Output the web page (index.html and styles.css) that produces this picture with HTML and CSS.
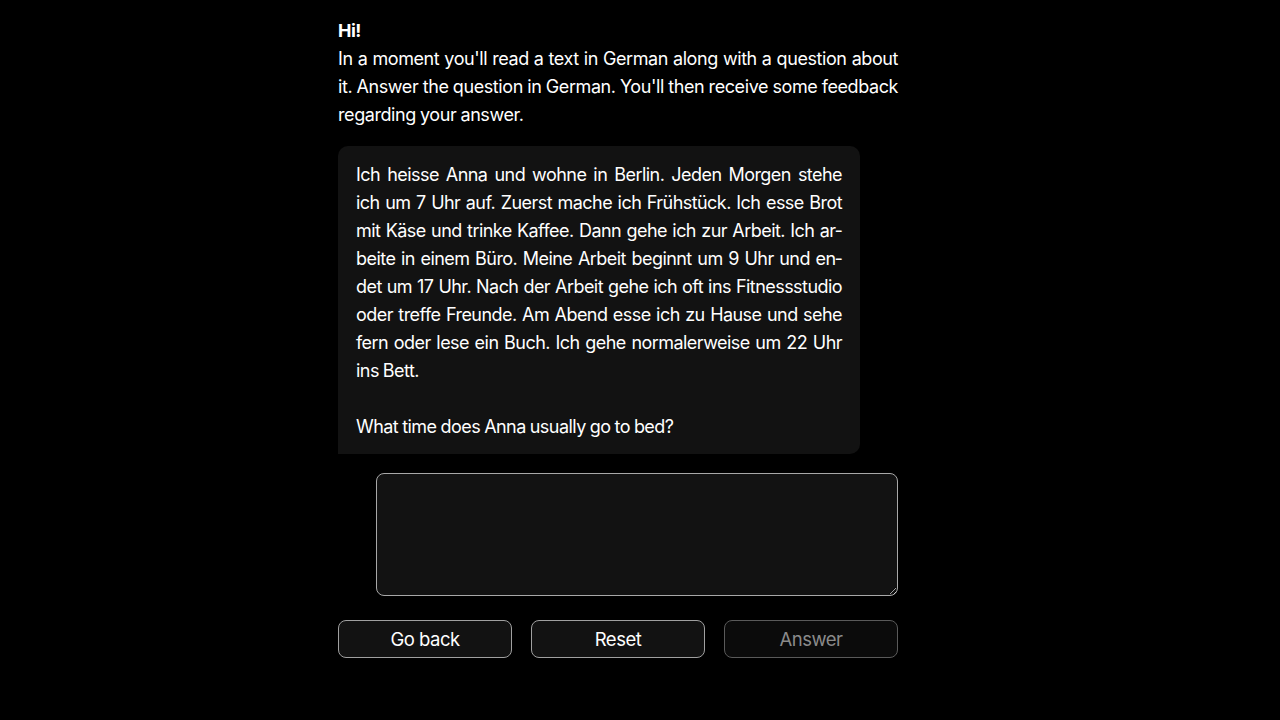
FILE: index.html
```html
<!DOCTYPE html>
<html lang="en">
<head>
<meta charset="utf-8">
<title>German reading</title>
<link rel="stylesheet" href="styles.css">
</head>
<body>
<main class="page">
  <section class="intro">
    <strong class="hi">Hi!</strong>
    <p class="intro-text">In a moment you'll read a text in German along with a question about it. Answer the question in German. You'll then receive some feedback regarding your answer.</p>
  </section>
  <div class="bubble" lang="de">
    <p class="story">Ich heisse Anna und wohne in Berlin. Jeden Morgen stehe ich um 7 Uhr auf. Zuerst mache ich Frühstück. Ich esse Brot mit Käse und trinke Kaffee. Dann gehe ich zur Arbeit. Ich ar&shy;beite in einem Büro. Meine Arbeit beginnt um 9 Uhr und en&shy;det um 17 Uhr. Nach der Arbeit gehe ich oft ins Fitnessstudio oder treffe Freunde. Am Abend esse ich zu Hause und sehe fern oder lese ein Buch. Ich gehe normalerweise um 22 Uhr ins Bett.</p>
    <p class="question" lang="en">What time does Anna usually go to bed?</p>
  </div>
  <div class="answer-row">
    <textarea class="answer-box" aria-label="Your answer"></textarea>
  </div>
  <div class="actions">
    <button class="btn">Go back</button>
    <button class="btn">Reset</button>
    <button class="btn" disabled>Answer</button>
  </div>
</main>
</body>
</html>
```
FILE: styles.css
```css
html, body {
  margin: 0;
  padding: 0;
  background: #000;
}
body {
  font-family: Inter, "Noto Sans", "Liberation Sans", sans-serif;
  color: #fff;
  font-size: 18px;
  line-height: 28px;
  letter-spacing: -0.55px;
  word-spacing: -0.5px;
}
.page {
  width: 560px;
  margin-left: calc(50% - 302px);
  padding-top: 17px;
  display: flex;
  flex-direction: column;
}
.intro {
  display: flex;
  flex-direction: column;
}
.hi {
  font-weight: 700;
}
.intro-text {
  margin: 0;
  text-align: justify;
  letter-spacing: -0.42px;
}
.bubble {
  margin-top: 17px;
  width: 522px;
  box-sizing: border-box;
  padding: 15px 18px 13px;
  background: #121212;
  border-radius: 10px 10px 10px 0;
}
.story {
  margin: 0;
  text-align: justify;
  hyphens: manual;
}
.question {
  margin: 28px 0 0;
}
.answer-row {
  margin-top: 19px;
  display: flex;
  justify-content: flex-end;
}
.answer-box {
  width: 522px;
  height: 123px;
  box-sizing: border-box;
  background: #121212;
  border: 1px solid #a8a8a8;
  border-radius: 8px;
  color: #fff;
  font: inherit;
  padding: 8px 12px;
  resize: vertical;
}
.actions {
  margin-top: 24px;
  display: grid;
  grid-template-columns: repeat(3, 1fr);
  gap: 19px;
}
.btn {
  height: 38px;
  box-sizing: border-box;
  background: #121212;
  border: 1px solid #a0a0a0;
  border-radius: 8px;
  color: #fff;
  font-family: inherit;
  font-size: 18.5px;
  letter-spacing: -0.5px;
  padding: 0;
}
.btn:disabled {
  background: #0b0b0b;
  border-color: #5a5a5a;
  color: #8a8a8a;
}
```
